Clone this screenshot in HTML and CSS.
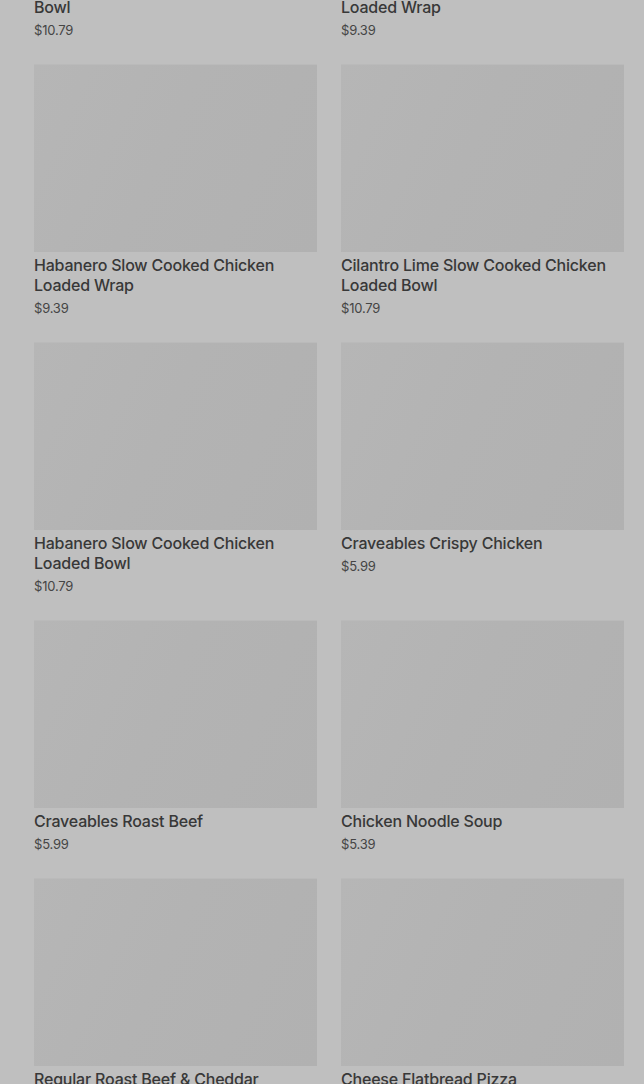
FILE: index.html
```html
<!DOCTYPE html>
<html lang="en">
<head>
<meta charset="utf-8">
<title>Menu</title>
<link rel="stylesheet" href="styles.css">
</head>
<body>
<main class="page">
  <ul class="grid">
    <li class="item"><div class="thumb"></div><div class="name">Spicy Slow Cooked Chicken Loaded Bowl</div><div class="price">$10.79</div></li>
    <li class="item"><div class="thumb"></div><div class="name">Cilantro Lime Slow Cooked Chicken Loaded Wrap</div><div class="price">$9.39</div></li>
    <li class="item"><div class="thumb"></div><div class="name">Habanero Slow Cooked Chicken Loaded Wrap</div><div class="price">$9.39</div></li>
    <li class="item"><div class="thumb"></div><div class="name">Cilantro Lime Slow Cooked Chicken Loaded Bowl</div><div class="price">$10.79</div></li>
    <li class="item"><div class="thumb"></div><div class="name">Habanero Slow Cooked Chicken Loaded Bowl</div><div class="price">$10.79</div></li>
    <li class="item"><div class="thumb"></div><div class="name">Craveables Crispy Chicken</div><div class="price">$5.99</div></li>
    <li class="item"><div class="thumb"></div><div class="name">Craveables Roast Beef</div><div class="price">$5.99</div></li>
    <li class="item"><div class="thumb"></div><div class="name">Chicken Noodle Soup</div><div class="price">$5.39</div></li>
    <li class="item"><div class="thumb"></div><div class="name">Regular Roast Beef &amp; Cheddar</div><div class="price">$6.49</div></li>
    <li class="item"><div class="thumb"></div><div class="name">Cheese Flatbread Pizza</div><div class="price">$6.99</div></li>
  </ul>
</main>
</body>
</html>
```
FILE: styles.css
```css
html, body {
  margin: 0;
  padding: 0;
  background: #bfbfbf;
  overflow: hidden;
}
body {
  font-family: Inter, Roboto, "Liberation Sans", sans-serif;
  color: #383838;
}
.page {
  padding: 0 20px 0 34px;
}
.grid {
  list-style: none;
  margin: -214px 0 0 0;
  padding: 0;
  display: grid;
  grid-template-columns: 283px 283px;
  column-gap: 24px;
  row-gap: 24px;
  align-items: start;
}
.item {
  display: flex;
  flex-direction: column;
}
.thumb {
  height: 188px;
  background: linear-gradient(115deg, #b6b6b6 0%, #b3b3b3 45%, #b1b1b1 100%);
  box-shadow: inset 0 1px 0 #bababa;
  margin-bottom: 3px;
}
.name {
  font-size: 16px;
  line-height: 20px;
  font-weight: 450;
  letter-spacing: -0.2px;
  color: #383838;
}
.price {
  margin-top: 3px;
  font-size: 13px;
  line-height: 20px;
  letter-spacing: -0.2px;
  color: #454545;
}
```
